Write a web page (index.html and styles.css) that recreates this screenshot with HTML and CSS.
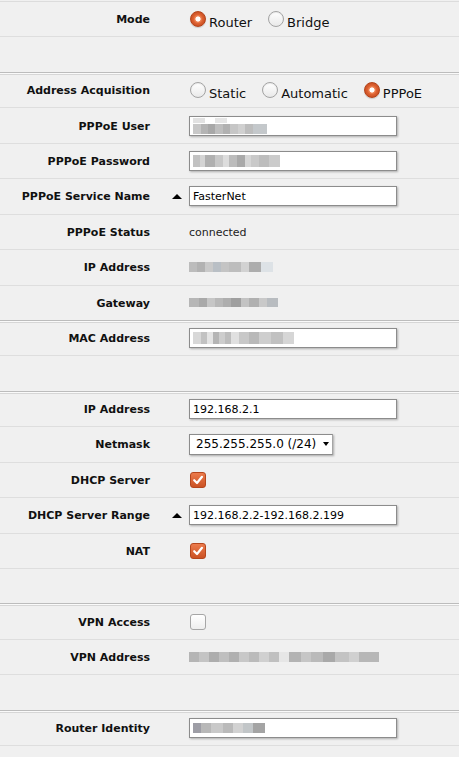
FILE: index.html
```html
<!DOCTYPE html>
<html lang="en">
<head>
<meta charset="utf-8">
<title>Quick Set</title>
<link rel="stylesheet" href="styles.css">
</head>
<body>
<div class="form">
  <div class="section">
    <div class="row">
      <div class="label">Mode</div><div class="aux"></div>
      <div class="value">
        <label class="opt"><span class="radio on"></span><span class="opt-text">Router</span></label>
        <label class="opt"><span class="radio"></span><span class="opt-text">Bridge</span></label>
      </div>
    </div>
    <div class="row"></div>
  </div>

  <div class="section">
    <div class="row">
      <div class="label">Address Acquisition</div><div class="aux"></div>
      <div class="value">
        <label class="opt"><span class="radio"></span><span class="opt-text">Static</span></label>
        <label class="opt"><span class="radio"></span><span class="opt-text">Automatic</span></label>
        <label class="opt"><span class="radio on"></span><span class="opt-text">PPPoE</span></label>
      </div>
    </div>
    <div class="row">
      <div class="label">PPPoE User</div><div class="aux"></div>
      <div class="value"><div class="field"><span class="blur blur-user"></span></div></div>
    </div>
    <div class="row">
      <div class="label">PPPoE Password</div><div class="aux"></div>
      <div class="value"><div class="field"><span class="blur blur-pass"></span></div></div>
    </div>
    <div class="row">
      <div class="label">PPPoE Service Name</div><div class="aux"><span class="up"></span></div>
      <div class="value"><div class="field">FasterNet</div></div>
    </div>
    <div class="row">
      <div class="label">PPPoE Status</div><div class="aux"></div>
      <div class="value"><span class="text">connected</span></div>
    </div>
    <div class="row">
      <div class="label">IP Address</div><div class="aux"></div>
      <div class="value"><span class="blur blur-ip"></span></div>
    </div>
    <div class="row">
      <div class="label">Gateway</div><div class="aux"></div>
      <div class="value"><span class="blur blur-gw"></span></div>
    </div>
  </div>

  <div class="section">
    <div class="row">
      <div class="label">MAC Address</div><div class="aux"></div>
      <div class="value"><div class="field"><span class="blur blur-mac"></span></div></div>
    </div>
    <div class="row"></div>
  </div>

  <div class="section">
    <div class="row">
      <div class="label">IP Address</div><div class="aux"></div>
      <div class="value"><div class="field">192.168.2.1</div></div>
    </div>
    <div class="row">
      <div class="label">Netmask</div><div class="aux"></div>
      <div class="value"><div class="select"><span>255.255.255.0 (/24)</span><span class="caret"></span></div></div>
    </div>
    <div class="row">
      <div class="label">DHCP Server</div><div class="aux"></div>
      <div class="value"><span class="check on"><svg width="12" height="12" viewBox="0 0 12 12"><path d="M2.2 6.2 L5 9 L10 2.8" fill="none" stroke="#fff" stroke-width="2.2" stroke-linecap="round" stroke-linejoin="round"/></svg></span></div>
    </div>
    <div class="row">
      <div class="label">DHCP Server Range</div><div class="aux"><span class="up"></span></div>
      <div class="value"><div class="field">192.168.2.2-192.168.2.199</div></div>
    </div>
    <div class="row">
      <div class="label">NAT</div><div class="aux"></div>
      <div class="value"><span class="check on"><svg width="12" height="12" viewBox="0 0 12 12"><path d="M2.2 6.2 L5 9 L10 2.8" fill="none" stroke="#fff" stroke-width="2.2" stroke-linecap="round" stroke-linejoin="round"/></svg></span></div>
    </div>
    <div class="row"></div>
  </div>

  <div class="section">
    <div class="row">
      <div class="label">VPN Access</div><div class="aux"></div>
      <div class="value"><span class="check"></span></div>
    </div>
    <div class="row">
      <div class="label">VPN Address</div><div class="aux"></div>
      <div class="value"><span class="blur blur-vpn"></span></div>
    </div>
    <div class="row"></div>
  </div>

  <div class="section">
    <div class="row">
      <div class="label">Router Identity</div><div class="aux"></div>
      <div class="value"><div class="field"><span class="blur blur-id"></span></div></div>
    </div>
    <div class="row"></div>
  </div>
</div>
</body>
</html>
```

FILE: styles.css
```css
* { box-sizing: border-box; }

html, body {
  margin: 0;
  padding: 0;
  background: #f0f0f0;
}

body {
  font-family: "DejaVu Sans", Verdana, sans-serif;
  font-size: 11px;
  color: #222;
}

.form {
  margin-top: 1px;
  border-top: 1px solid #dcdcdc;
}

.section + .section {
  box-shadow: inset 0 1px 0 #fafafa, inset 0 2px 0 #d6d6d6;
}

.row {
  display: grid;
  grid-template-columns: 150px 39px 1fr;
  align-items: center;
  height: 35.45px;
  border-bottom: 1px solid #dedede;
}

.section > .row:last-child {
  border-bottom-color: #bcbcbc;
}

.label {
  padding-top: 1px;
  text-align: right;
  font-weight: bold;
  font-size: 11px;
  color: #111;
  white-space: nowrap;
}

.aux {
  display: flex;
  justify-content: flex-end;
  padding-right: 7px;
}

.up {
  width: 0;
  height: 0;
  border-left: 5.5px solid transparent;
  border-right: 5.5px solid transparent;
  border-bottom: 5px solid #000;
}

.value {
  display: flex;
  align-items: center;
}

.opt {
  display: flex;
  align-items: center;
  margin-right: 15px;
  font-size: 13px;
  color: #111;
}

.opt-text {
  padding-top: 6px;
}

.radio {
  width: 16px;
  height: 16px;
  margin-left: 1px;
  margin-right: 3px;
  border-radius: 50%;
  border: 1px solid #a3a3a3;
  background: linear-gradient(#ffffff, #e9e9e9);
  box-shadow: inset 0 1px 1px rgba(0, 0, 0, 0.08);
}

.radio.on {
  border-color: #b3441b;
  background: radial-gradient(circle, #ffffff 0 2.2px, #f08a5c 2.9px, #de6333 4.5px, #cc5124 7px);
  box-shadow: 0 1px 1px rgba(0, 0, 0, 0.15);
}

.check {
  width: 16px;
  height: 16px;
  margin-left: 1px;
  border-radius: 3px;
  border: 1px solid #a6a6a6;
  background: linear-gradient(#ffffff, #eeeeee);
  display: flex;
  align-items: center;
  justify-content: center;
}

.check.on {
  border-color: #b5461d;
  background: linear-gradient(#ec7b4c, #cb5224);
}

.field {
  width: 208px;
  height: 20px;
  padding: 0 3px;
  display: flex;
  align-items: center;
  background: #fff;
  border: 1px solid #8c8c8c;
  box-shadow: 1px 1px 2px rgba(0, 0, 0, 0.28);
  font-size: 11px;
  color: #000;
  white-space: nowrap;
}

.select {
  width: 144px;
  height: 21px;
  padding: 0 3px 0 6px;
  display: flex;
  align-items: center;
  justify-content: space-between;
  background: #fff;
  border: 1px solid #8c8c8c;
  border-right-color: #a5a5a5;
  box-shadow: 1px 1px 2px rgba(0, 0, 0, 0.3);
  font-size: 12px;
  color: #000;
  white-space: nowrap;
}

.caret {
  width: 0;
  height: 0;
  border-left: 3px solid transparent;
  border-right: 3px solid transparent;
  border-top: 4px solid #000;
}

.text {
  padding-top: 1px;
  font-size: 11px;
  color: #222;
}

.blur {
  display: block;
  height: 10px;
}

.blur-user {
  width: 74px;
  height: 16px;
  background:
    linear-gradient(90deg, #e2e2e2 0 12px, transparent 12px 22px, #e6e6e6 22px 34px, transparent 34px) top / 100% 5px no-repeat,
    linear-gradient(90deg, #c8c8c8 0 8px, #b4b4b4 8px 15px, #a8a8a8 15px 22px, #bebebe 22px 30px, #b1b1b1 30px 37px, #c6c6c6 37px 45px, #d0d0d0 45px 52px, #bdbdbd 52px 60px, #c4c8cb 60px 74px) bottom / 100% 10px no-repeat;
}

.blur-pass {
  width: 87px;
  height: 12px;
  background: linear-gradient(90deg, #c2c2c2 0 7px, #d4d4d4 7px 12px, #b0b0b0 12px 22px, #c8c8c8 22px 30px, #dddddd 30px 36px, #bcbcbc 36px 44px, #a9a9a9 44px 52px, #d6d6d6 52px 58px, #c9c9c9 58px 66px, #bdbdbd 66px 76px, #cbcbcb 76px 87px);
}

.blur-ip {
  width: 84px;
  background: linear-gradient(90deg, #bcbcbc 0 8px, #b2b2b2 8px 16px, #c9c9c9 16px 24px, #b9bfc5 24px 32px, #c4c4c4 32px 40px, #bdbdbd 40px 52px, #d2d2d2 52px 60px, #adadad 60px 72px, #dde2e6 72px 84px);
}

.blur-gw {
  width: 89px;
  height: 9px;
  background: linear-gradient(90deg, #b6b6b6 0 10px, #a9a9a9 10px 18px, #c6c6c6 18px 26px, #b8b8b8 26px 34px, #aeaeae 34px 42px, #9f9f9f 42px 52px, #c3c3c3 52px 60px, #b0b0b0 60px 70px, #c9c9c9 70px 78px, #b8bcc0 78px 89px);
}

.blur-mac {
  width: 101px;
  height: 12px;
  background: linear-gradient(90deg, #d8d8d8 0 8px, #c2c2c2 8px 14px, #e4e4e4 14px 20px, #b5b5b5 20px 26px, #cdcdcd 26px 32px, #bdbdbd 32px 38px, #e0e0e0 38px 46px, #c8c8c8 46px 56px, #b9b9b9 56px 66px, #cecece 66px 78px, #c1c1c1 78px 90px, #d6d6d6 90px 101px);
}

.blur-vpn {
  width: 190px;
  background: linear-gradient(90deg, #b5b5b5 0 10px, #c4c4c4 10px 20px, #adadad 20px 30px, #bfbfbf 30px 40px, #b0b0b0 40px 50px, #c8c8c8 50px 60px, #bbbbbb 60px 70px, #d0d0d0 70px 80px, #c0c0c0 80px 90px, #e6e6e6 90px 100px, #b3b3b3 100px 112px, #c6c6c6 112px 122px, #bababa 122px 134px, #a9a9a9 134px 146px, #c3c3c3 146px 160px, #d0d0d0 160px 170px, #b7b7b7 170px 190px);
}

.blur-id {
  width: 72px;
  background: linear-gradient(90deg, #9e9ea6 0 8px, #b8b8b8 8px 18px, #c9c9c9 18px 30px, #bababa 30px 40px, #d2d2d2 40px 50px, #c2c6c8 50px 60px, #a4a4a4 60px 72px);
}
```
